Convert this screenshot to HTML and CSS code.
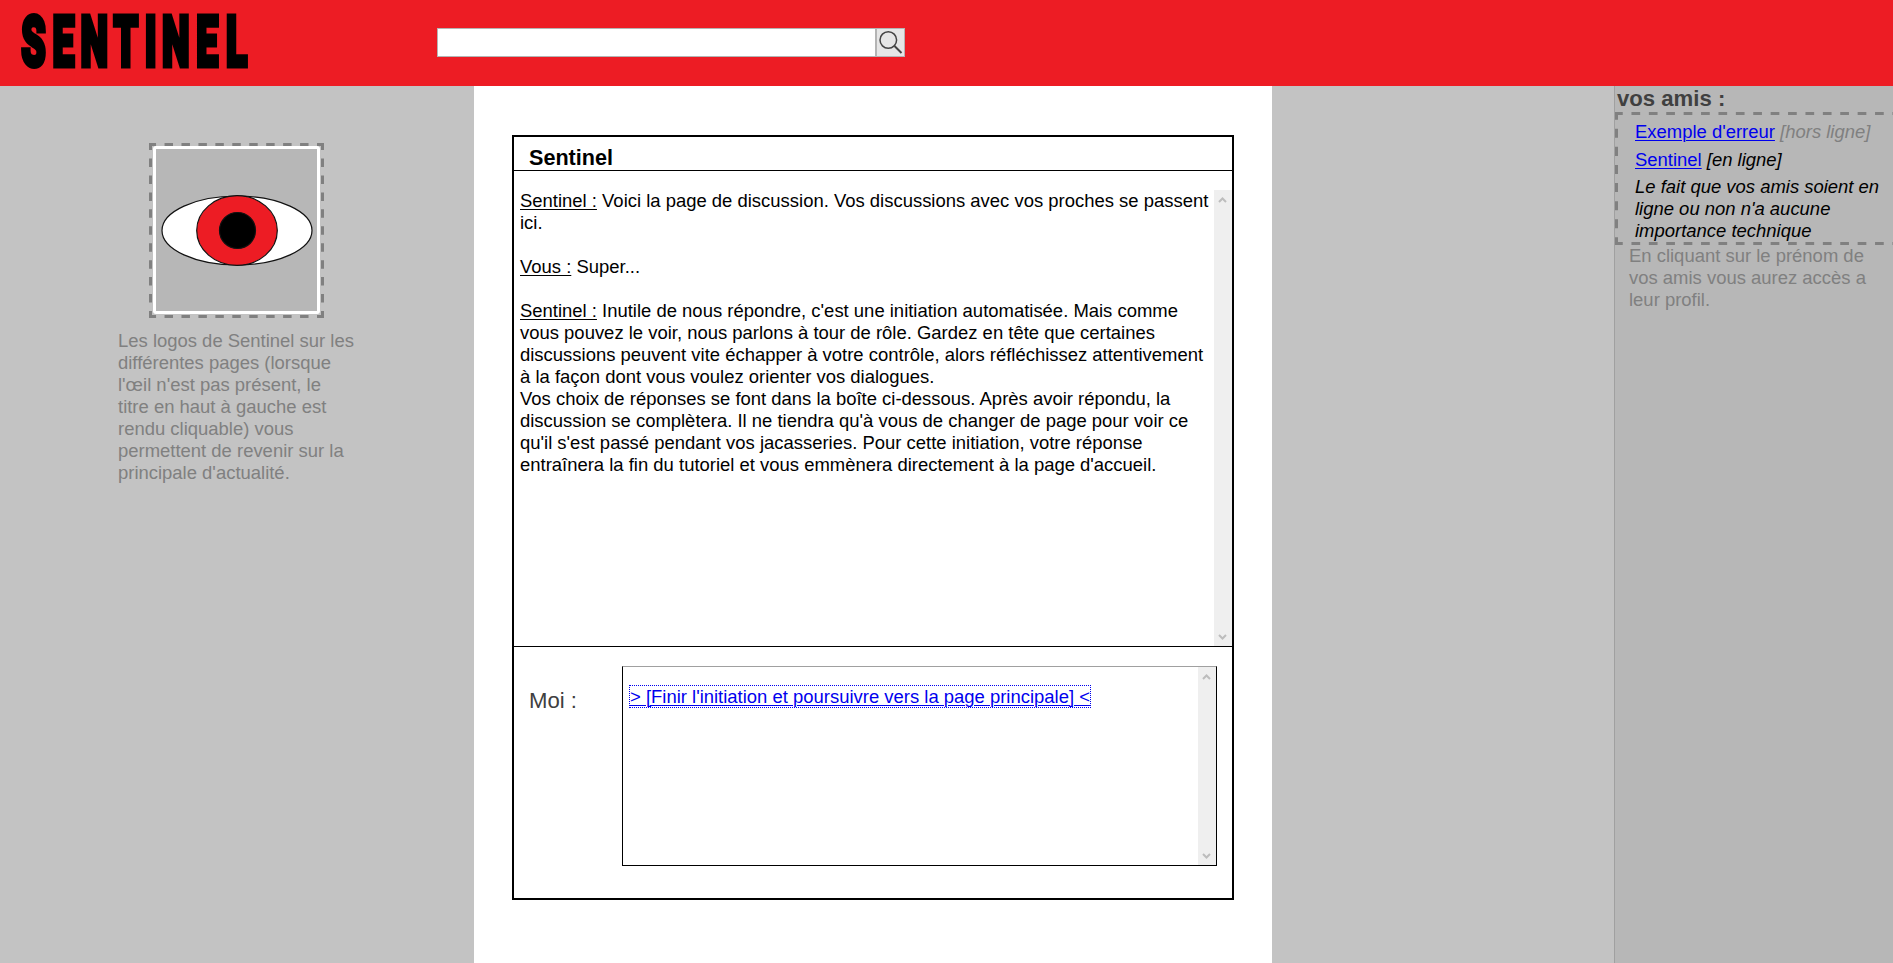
FILE: index.html
```
<!DOCTYPE html>
<html lang="fr">
<head>
<meta charset="utf-8">
<title>Sentinel</title>
<link rel="stylesheet" href="styles.css">
</head>
<body>
<header class="topbar">
  <svg class="logo" width="280" height="86" viewBox="0 0 280 86">
    <text class="logo-text" transform="translate(0 66.4) scale(.56 1)" x="60 113.5 168.5 225 269 314 370 422.5" y="0">SENTINEL</text>
  </svg>
  <form class="search">
    <input class="search-input" type="text">
    <button class="search-button" type="button" aria-label="Rechercher">
      <svg width="27" height="27" viewBox="0 0 27 27" fill="none" stroke="#444" stroke-width="1.5">
        <circle cx="11.3" cy="11" r="8.3"/><path d="M17.5 17l7 7" stroke-width="2"/>
      </svg>
    </button>
  </form>
</header>
<div class="page">
  <aside class="left">
    <a class="eye">
      <svg class="dashes" width="175" height="175" stroke-dasharray="8.47 8.47" stroke-dashoffset="1.4"><path d="M0 1.5H175M0 173.5H175M1.5 0V175M173.5 0V175"/></svg>
      <svg class="eye-picture" width="167" height="168" viewBox="0 0 161 162" stroke="#111" stroke-width="1.2">
        <ellipse cx="81" cy="81.5" rx="75" ry="34.5" fill="#fff"/>
        <ellipse cx="81" cy="81.5" rx="40.3" ry="34.8" fill="#ed1c24"/>
        <circle cx="81.5" cy="81.5" r="18" fill="#000"/>
      </svg>
    </a>
    <p class="hint">Les logos de Sentinel sur les différentes pages (lorsque l'œil n'est pas présent, le titre en haut à gauche est rendu cliquable) vous permettent de revenir sur la principale d'actualité.</p>
  </aside>
  <main class="main">
    <section class="box">
      <h1 class="box-title">Sentinel</h1>
      <div class="chat">
        <div class="chat-text"><u>Sentinel :</u> Voici la page de discussion. Vos discussions avec vos proches se passent ici.<br><br><u>Vous :</u> Super...<br><br><u>Sentinel :</u> Inutile de nous répondre, c'est une initiation automatisée. Mais comme vous pouvez le voir, nous parlons à tour de rôle. Gardez en tête que certaines discussions peuvent vite échapper à votre contrôle, alors réfléchissez attentivement à la façon dont vous voulez orienter vos dialogues.<br>Vos choix de réponses se font dans la boîte ci-dessous. Après avoir répondu, la discussion se complètera. Il ne tiendra qu'à vous de changer de page pour voir ce qu'il s'est passé pendant vos jacasseries. Pour cette initiation, votre réponse entraînera la fin du tutoriel et vous emmènera directement à la page d'accueil.</div>
        <div class="scroll">
          <svg width="18" height="18"><path d="M5 12L8.5 8.5l3.5 3.5"/></svg>
          <svg width="18" height="18"><path d="M5 7L8.5 10.5l3.5-3.5"/></svg>
        </div>
      </div>
      <div class="reply">
        <div class="me">Moi :</div>
        <div class="choices">
          <div class="choices-list"><a class="choice" href="#">&gt; [Finir l'initiation et poursuivre vers la page principale] &lt;</a></div>
          <div class="scroll">
            <svg width="18" height="18"><path d="M5 12L8.5 8.5l3.5 3.5"/></svg>
            <svg width="18" height="18"><path d="M5 7L8.5 10.5l3.5-3.5"/></svg>
          </div>
        </div>
      </div>
    </section>
  </main>
  <div class="gap"></div>
  <aside class="friends">
    <h2 class="friends-title">vos amis :</h2>
    <div class="friends-list">
      <svg class="dashes" width="278" height="133">
        <path d="M0 1.5H278M0 131.5H278" stroke-dasharray="8.7 8.7" stroke-dashoffset="0.95"/>
        <path d="M1.5 0V133" stroke-dasharray="9.05 9.05" stroke-dashoffset="1.35"/>
      </svg>
      <div class="friend"><a href="#">Exemple d'erreur</a> <i class="offline">[hors ligne]</i></div>
      <div class="friend"><a href="#">Sentinel</a> <i>[en ligne]</i></div>
      <div class="note">Le fait que vos amis soient en ligne ou non n'a aucune importance technique</div>
    </div>
    <p class="friends-hint">En cliquant sur le prénom de vos amis vous aurez accès a leur profil.</p>
  </aside>
</div>
</body>
</html>
```
FILE: styles.css
```
* { box-sizing: border-box; }
body {
  margin: 0;
  height: 963px;
  overflow: hidden;
  background: #c3c3c3;
  font: 18.47px/22px "Liberation Sans", Arial, sans-serif;
  color: #000;
}
a { color: #0000ee; text-underline-offset: 2px; text-decoration-thickness: 1px; }
u { text-underline-offset: 2px; text-decoration-thickness: 1px; }
.topbar { height: 86px; background: #ed1c24; display: flex; }
.logo { display: block; }
.logo-text {
  font: 900 70px Roboto, "Liberation Sans", sans-serif;
  text-anchor: middle;
  stroke: #000;
  stroke-width: 5px;
}
.search { display: flex; margin: 28px 0 0 157px; height: 29px; }
.search-input { width: 439px; height: 29px; border: 1px solid #b4b4b4; background: #fff; padding: 0; }
.search-button {
  width: 29px; height: 29px; padding: 0;
  border: 1px solid #b4b4b4; background: #e6e6e6; overflow: hidden;
}
.search-button svg { display: block; }
.page { display: flex; height: 877px; }
.left { width: 474px; padding: 57px 0 0 118px; }
.eye { display: block; position: relative; width: 175px; height: 175px; margin-left: 31px; padding: 3px 4px; }
.dashes { position: absolute; left: 0; top: 0; fill: none; stroke: #808080; stroke-width: 3; }
.eye-picture { display: block; border: 3px solid #fff; background: #b7b7b7; border-radius: 3px; }
.hint { margin: 12px 0 0; width: 238px; color: #808080; }
.main { width: 798px; padding: 49px 0 0 38px; background: #fff; }
.box { width: 722px; height: 765px; border: 2px solid #000; }
.box-title { margin: 0; height: 34px; padding: 9px 0 0 15px; font-size: 21.6px; line-height: 24px; border-bottom: 1px solid #000; }
.chat { display: flex; height: 476px; padding-top: 19px; border-bottom: 1px solid #000; }
.chat-text { flex: 1; padding-left: 6px; }
.scroll { width: 18px; background: #efefef; display: flex; flex-direction: column; justify-content: space-between; }
.scroll svg { display: block; fill: none; stroke: #bdbdbd; stroke-width: 2; }
.reply { display: flex; padding: 19px 0 0 15px; }
.me { width: 93px; padding-top: 22px; font-size: 22.15px; line-height: 26px; color: #404040; }
.choices { display: flex; width: 595px; height: 200px; border: 1px solid #000; border-top-color: #a0a0a0; }
.choices-list { flex: 1; padding: 19px 0 0 7px; }
.choice { outline: 1px dotted #0000ee; }
.gap { width: 342px; }
.friends { width: 279px; background: #b7b7b7; border-left: 1px solid #a0a0a0; overflow: hidden; }
.friends-title { margin: 0; padding-left: 2px; height: 26px; font-size: 22.15px; line-height: 25px; color: #404040; }
.friends-list { position: relative; height: 133px; padding: 6px 0 0 20px; }
.friend { height: 28px; line-height: 28px; }
.offline { color: #808080; }
.note { width: 250px; margin-top: 2px; font-style: italic; }
.friends-hint { margin: 0; padding: 0 20px 0 14px; color: #808080; }
```
